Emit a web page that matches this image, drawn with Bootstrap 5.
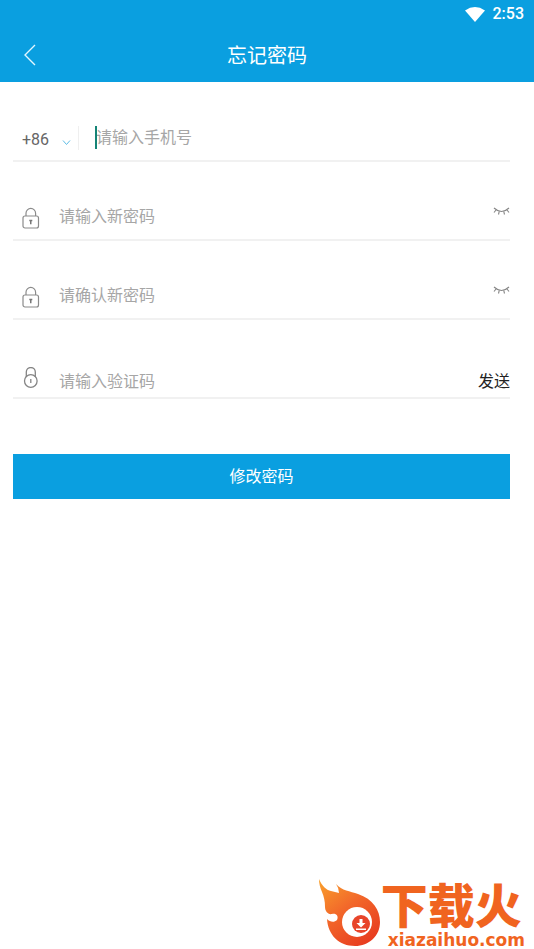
<!DOCTYPE html>
<html lang="zh-CN">
<head>
<meta charset="utf-8">
<meta name="viewport" content="width=device-width, initial-scale=1">
<title>忘记密码</title>
<link href="https://cdn.jsdelivr.net/npm/bootstrap@5.3.0/dist/css/bootstrap.min.css" rel="stylesheet">
<style>
:root { --brand: #0a9fe0; --muted: #a6a6a6; }
body { font-family: Roboto, "Noto Sans CJK SC", sans-serif; font-size: 16px; line-height: 24px; color: #222; background: #fff; }
.app-header { background: var(--brand); color: #fff; }
.status-bar { height: 28px; padding-right: 10px; font-weight: 500; }
.title-bar { display: grid; grid-template-columns: 60px 1fr 60px; height: 54px; }
.title-bar h1 { font-size: 20px; line-height: 30px; font-weight: 400; padding-top: 2px; }
.reset-form { padding: 1px 24px 0 13px; }
.form-line { height: 79px; padding-bottom: 10px; border-bottom: 2px solid #f1f1f1; }
.form-line.code-line { padding-bottom: 3px; }
.lead-icon { width: 46px; padding-left: 9px; }
.entry { font-size: 16px; line-height: 24px; color: #333; }
.entry::placeholder { color: var(--muted); opacity: 1; }
.dial { width: 66px; padding: 4px 0 0 9px; height: 24px; border-right: 1px solid #efefef; margin-right: 17px; }
.dial select { appearance: none; width: 36px; color: #666; line-height: 20px; outline: 0; }
.caret-wrap::before { content: ""; position: absolute; left: -1px; top: 0; width: 2px; height: 23px; background: #148476; }
.eye-toggle { padding: 0 0 10px; }
.send { font-size: 16px; line-height: 24px; color: #222; }
.submit { margin-top: 55px; height: 45px; background: var(--brand); color: #fff; --bs-btn-hover-bg: #0891ce; --bs-btn-hover-color: #fff; }
.brand-logo { padding: 0 9px 2px 0; color: #f0641f; }
.brand-logo:hover { color: #f0641f; }
.brand-name { font-family: "Noto Sans CJK SC", sans-serif; font-weight: 900; font-size: 47px; line-height: 48px; padding-bottom: 6px; }
.brand-url { font-family: "DejaVu Sans", sans-serif; font-weight: 700; font-size: 17px; line-height: 14px; padding-left: 7px; }
</style>
<script src="https://cdn.jsdelivr.net/npm/bootstrap@5.3.0/dist/js/bootstrap.bundle.min.js" defer></script>
</head>
<body class="min-vh-100 d-flex flex-column">
<header class="app-header">
  <div class="status-bar d-flex justify-content-end align-items-center gap-2">
    <svg width="20" height="15" viewBox="0 0 20 15" fill="#fff" aria-hidden="true"><path d="M0 3.4Q10-3.4 20 3.4L10 15Z"/></svg>
    <span>2:53</span>
  </div>
  <div class="title-bar align-items-center">
    <button type="button" class="btn p-0 border-0 text-start ps-4 lh-1" aria-label="返回">
      <svg width="12" height="22" viewBox="0 0 12 22" fill="none" stroke="#e2f7ff" stroke-width="1.4" aria-hidden="true"><path d="M11 1L1 11L11 21"/></svg>
    </button>
    <h1 class="m-0 text-center">忘记密码</h1>
  </div>
</header>

<main>
  <form class="reset-form">
    <div class="form-line d-flex align-items-end">
      <div class="dial d-flex align-items-center">
        <select class="border-0 bg-transparent p-0" aria-label="国家代码"><option>+86</option></select>
        <svg class="ms-1 mt-1" width="9" height="7" viewBox="0 0 9 7" fill="none" stroke="#5ebde6" aria-hidden="true"><path d="M1 1.5L4.5 5.5L8 1.5"/></svg>
      </div>
      <div class="caret-wrap position-relative flex-grow-1">
        <input class="entry w-100 border-0 p-0 bg-transparent d-block" type="tel" placeholder="请输入手机号" aria-label="手机号">
      </div>
    </div>

    <div class="form-line d-flex align-items-end">
      <svg class="d-none"><symbol id="lock" viewBox="0 0 18 22"><g fill="none" stroke="#8b8b8b" stroke-width="1.2"><rect x="1" y="9" width="15.5" height="12" rx="2"/><path d="M4 9V6.200a4.800 4.800 0 0 1 9.600 0V9"/></g><path d="M7.3 12.800h3v1.5h-.8v3H8v-3h-.7z" fill="#777"/></symbol>
      <symbol id="eye" viewBox="0 0 17 9"><path d="M1 1Q8.500 8 16 1M3 3L1 5.500M6.200 4.700L5.500 7.500M10.800 4.700L11.500 7.500M14 3L16 5.500" fill="none" stroke="#858585" stroke-width="1.100"/></symbol></svg>
      <label class="lead-icon lh-1" for="new-password" aria-label="新密码"><svg width="18" height="22" aria-hidden="true"><use href="#lock"/></svg></label>
      <input id="new-password" class="entry flex-grow-1 border-0 p-0 bg-transparent" type="password" placeholder="请输入新密码">
      <button type="button" class="eye-toggle btn border-0 lh-1" aria-label="显示新密码"><svg width="17" height="9" aria-hidden="true"><use href="#eye"/></svg></button>
    </div>

    <div class="form-line d-flex align-items-end">
      <label class="lead-icon lh-1" for="confirm-password" aria-label="确认新密码"><svg width="18" height="22" aria-hidden="true"><use href="#lock"/></svg></label>
      <input id="confirm-password" class="entry flex-grow-1 border-0 p-0 bg-transparent" type="password" placeholder="请确认新密码">
      <button type="button" class="eye-toggle btn border-0 lh-1" aria-label="显示确认密码"><svg width="17" height="9" aria-hidden="true"><use href="#eye"/></svg></button>
    </div>

    <div class="form-line code-line d-flex align-items-end">
      <label class="lead-icon lh-1 pb-1" for="code" aria-label="验证码"><svg width="18" height="23" viewBox="0 0 18 23" fill="none" stroke="#858585" stroke-width="1.300" aria-hidden="true"><circle cx="8.800" cy="14" r="6.300"/><path d="M4.300 10V5a4.500 4.500 0 0 1 9 0v5M8.800 12v4"/></svg></label>
      <input id="code" class="entry flex-grow-1 border-0 p-0 bg-transparent" type="text" inputmode="numeric" placeholder="请输入验证码">
      <button type="button" class="send btn p-0 border-0 flex-shrink-0">发送</button>
    </div>

    <button type="submit" class="submit btn w-100 rounded-0 border-0 p-0">修改密码</button>
  </form>
</main>

<footer class="mt-auto d-flex justify-content-end">
  <a href="#" class="brand-logo d-flex align-items-end text-decoration-none">
    <svg width="62" height="68" viewBox="0 0 62 68" aria-hidden="true">
      <defs><linearGradient id="flame" x1="0" y1="0" x2=".7" y2="1"><stop offset="0" stop-color="#f9a12c"/><stop offset=".5" stop-color="#f2672a"/><stop offset="1" stop-color="#e83e20"/></linearGradient></defs>
      <path d="M0 0C3 7 7 11 12 12Q16 13 20 14Q20 9 17 5C23 12 31 12 39 15C54 20 61 31 61 43C61 57 50 67 36 67C20 67 9 56 8 40C11 43 15 44 18 41C20 37 17 34 13 35C9 36 6 32 6 28C6 22 5 18 3 13C1 9 0 4 0 0Z" fill="url(#flame)"/>
      <circle cx="38" cy="43" r="15" fill="#fff"/>
      <circle cx="42" cy="45" r="9" fill="#e8442a"/>
      <path d="M40.500 40h3v4h3L42 48.500L37.500 44h3zM37 49.500h10v1.500H37z" fill="#fff"/>
    </svg>
    <span class="d-flex flex-column">
      <span class="brand-name">下载火</span>
      <span class="brand-url">xiazaihuo.com</span>
    </span>
  </a>
</footer>
</body>
</html>
